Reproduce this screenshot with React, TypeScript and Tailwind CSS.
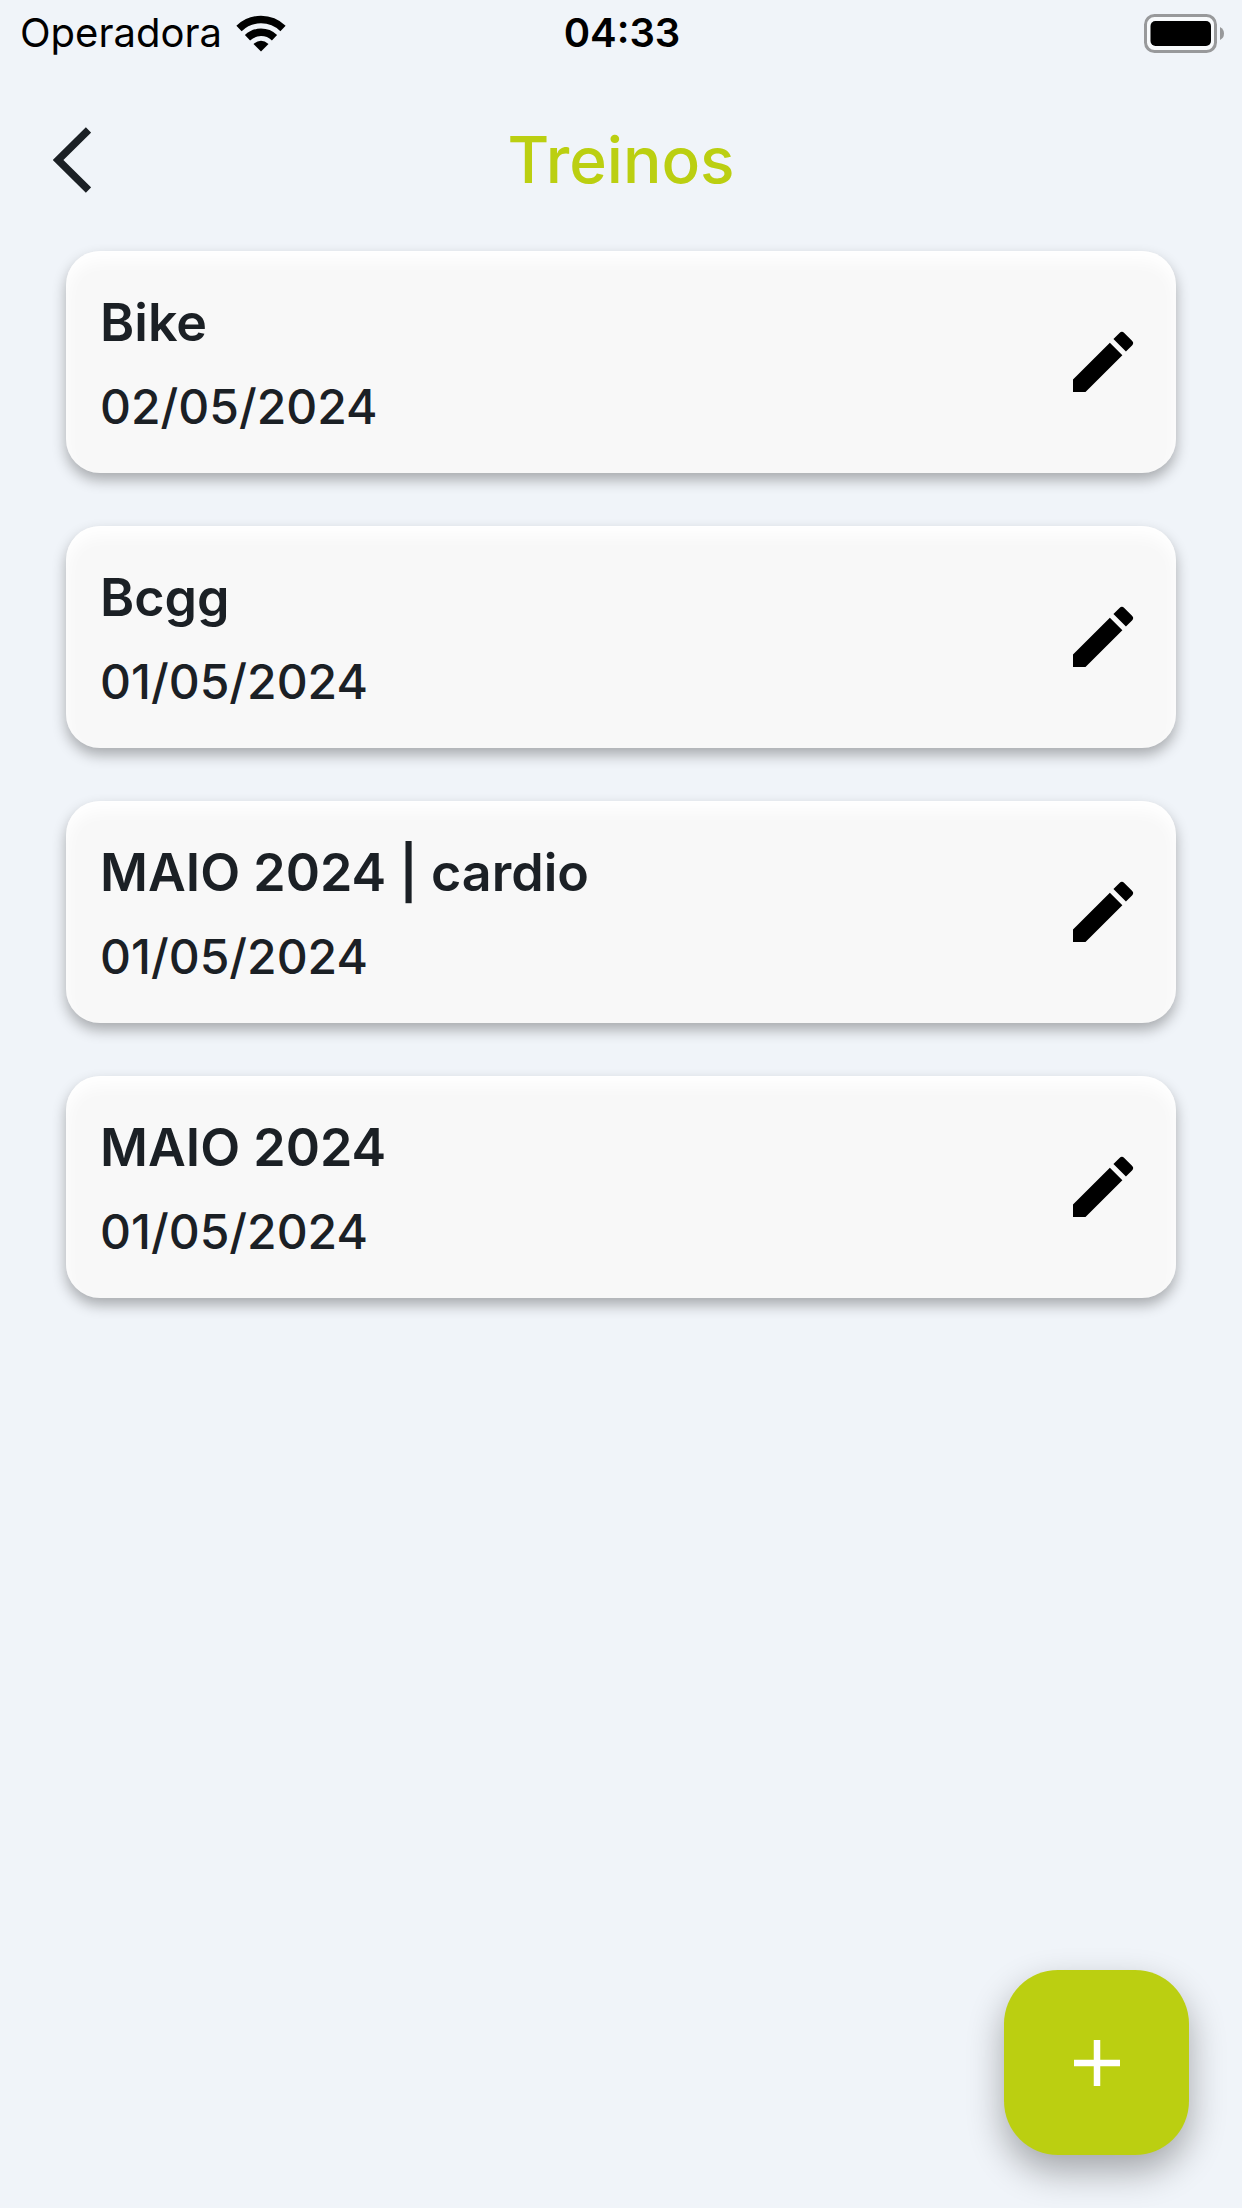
interface Workout {
  id: number;
  name: string;
  date: string;
}

const workouts: Workout[] = [
  { id: 1, name: "Bike", date: "02/05/2024" },
  { id: 2, name: "Bcgg", date: "01/05/2024" },
  { id: 3, name: "MAIO 2024 | cardio", date: "01/05/2024" },
  { id: 4, name: "MAIO 2024", date: "01/05/2024" },
];

function WifiIcon() {
  return (
    <svg width="50" height="37" viewBox="0 0 50 37" fill="none" aria-hidden="true">
      <path d="M3 13.5A31.5 31.5 0 0 1 47 13.5" stroke="#000" strokeWidth="7.5" />
      <path d="M11.5 22.8A19.5 19.5 0 0 1 38.5 22.8" stroke="#000" strokeWidth="7.5" />
      <path d="M25 36.5L17.5 29Q25 22.5 32.5 29Z" fill="#000" />
    </svg>
  );
}

function BatteryIcon() {
  return (
    <svg width="80" height="39" viewBox="0 0 80 39" aria-hidden="true">
      <rect x="1.5" y="1.5" width="70" height="36" rx="9" fill="#f8fafc" stroke="#98999b" strokeWidth="3" />
      <rect x="6.5" y="7" width="60.5" height="25" rx="5" fill="#000" />
      <path d="M76 13Q80 15 80 19.5Q80 24 76 26Z" fill="#98999b" />
    </svg>
  );
}

function StatusBar() {
  return (
    <div className="grid grid-cols-3 items-center h-[66px] pl-5 pr-[18px] text-[40px] leading-[66px] text-black">
      <div className="flex items-center gap-[14px]">
        <span>Operadora</span>
        <WifiIcon />
      </div>
      <span className="text-center font-semibold">04:33</span>
      <div className="flex justify-end">
        <BatteryIcon />
      </div>
    </div>
  );
}

function Header() {
  return (
    <header className="grid grid-cols-[80px_1fr_80px] items-center px-8 pt-11 pb-[41px]">
      <button type="button" aria-label="Voltar" className="flex size-20 items-center justify-center">
        <svg width="38" height="66" viewBox="0 0 38 66" fill="none" aria-hidden="true">
          <path d="M35.5 3L5 33L35.5 63" stroke="#1b2025" strokeWidth="7.5" />
        </svg>
      </button>
      <h1 className="text-center text-[64px] leading-[100px] font-medium text-[#bbcf11]">Treinos</h1>
    </header>
  );
}

function WorkoutCard({ workout }: { workout: Workout }) {
  return (
    <li className="flex items-center justify-between rounded-[34px] bg-[#f8f8f8] py-[30px] pl-[34px] pr-[33px] shadow-[0_7px_14px_rgba(0,0,0,0.3),inset_0_10px_16px_#ffffff]">
      <div className="flex flex-col gap-3 pt-[6px] text-[#1b2025]">
        <h2 className="text-[52px] leading-[72px] font-semibold">{workout.name}</h2>
        <p className="text-[48px] leading-[72px] font-medium">{workout.date}</p>
      </div>
      <button type="button" aria-label={`Editar ${workout.name}`}>
        <svg width="80" height="80" viewBox="0 0 24 24" fill="#000" aria-hidden="true">
          <path d="M3 17.25V21h3.75L17.81 9.94l-3.75-3.75L3 17.25zM20.71 7.04a.996.996 0 0 0 0-1.41l-2.34-2.34a.996.996 0 0 0-1.41 0l-1.83 1.83 3.75 3.75 1.83-1.83z" />
        </svg>
      </button>
    </li>
  );
}

export default function App() {
  return (
    <div className="min-h-screen bg-[#f0f4f9] font-['Inter','Liberation_Sans',sans-serif]">
      <StatusBar />
      <Header />
      <main className="px-[66px]">
        <ul className="flex flex-col gap-[53px]">
          {workouts.map((workout) => (
            <WorkoutCard key={workout.id} workout={workout} />
          ))}
        </ul>
      </main>
      <button
        type="button"
        aria-label="Adicionar treino"
        className="fixed right-[53px] bottom-[53px] flex size-[185px] items-center justify-center rounded-[54px] bg-[#bbcf11] shadow-[0_16px_36px_rgba(0,0,0,0.32)]"
      >
        <svg width="46" height="46" viewBox="0 0 46 46" aria-hidden="true">
          <path d="M23 0V46M0 23H46" stroke="#fff" strokeWidth="6.5" />
        </svg>
      </button>
    </div>
  );
}
